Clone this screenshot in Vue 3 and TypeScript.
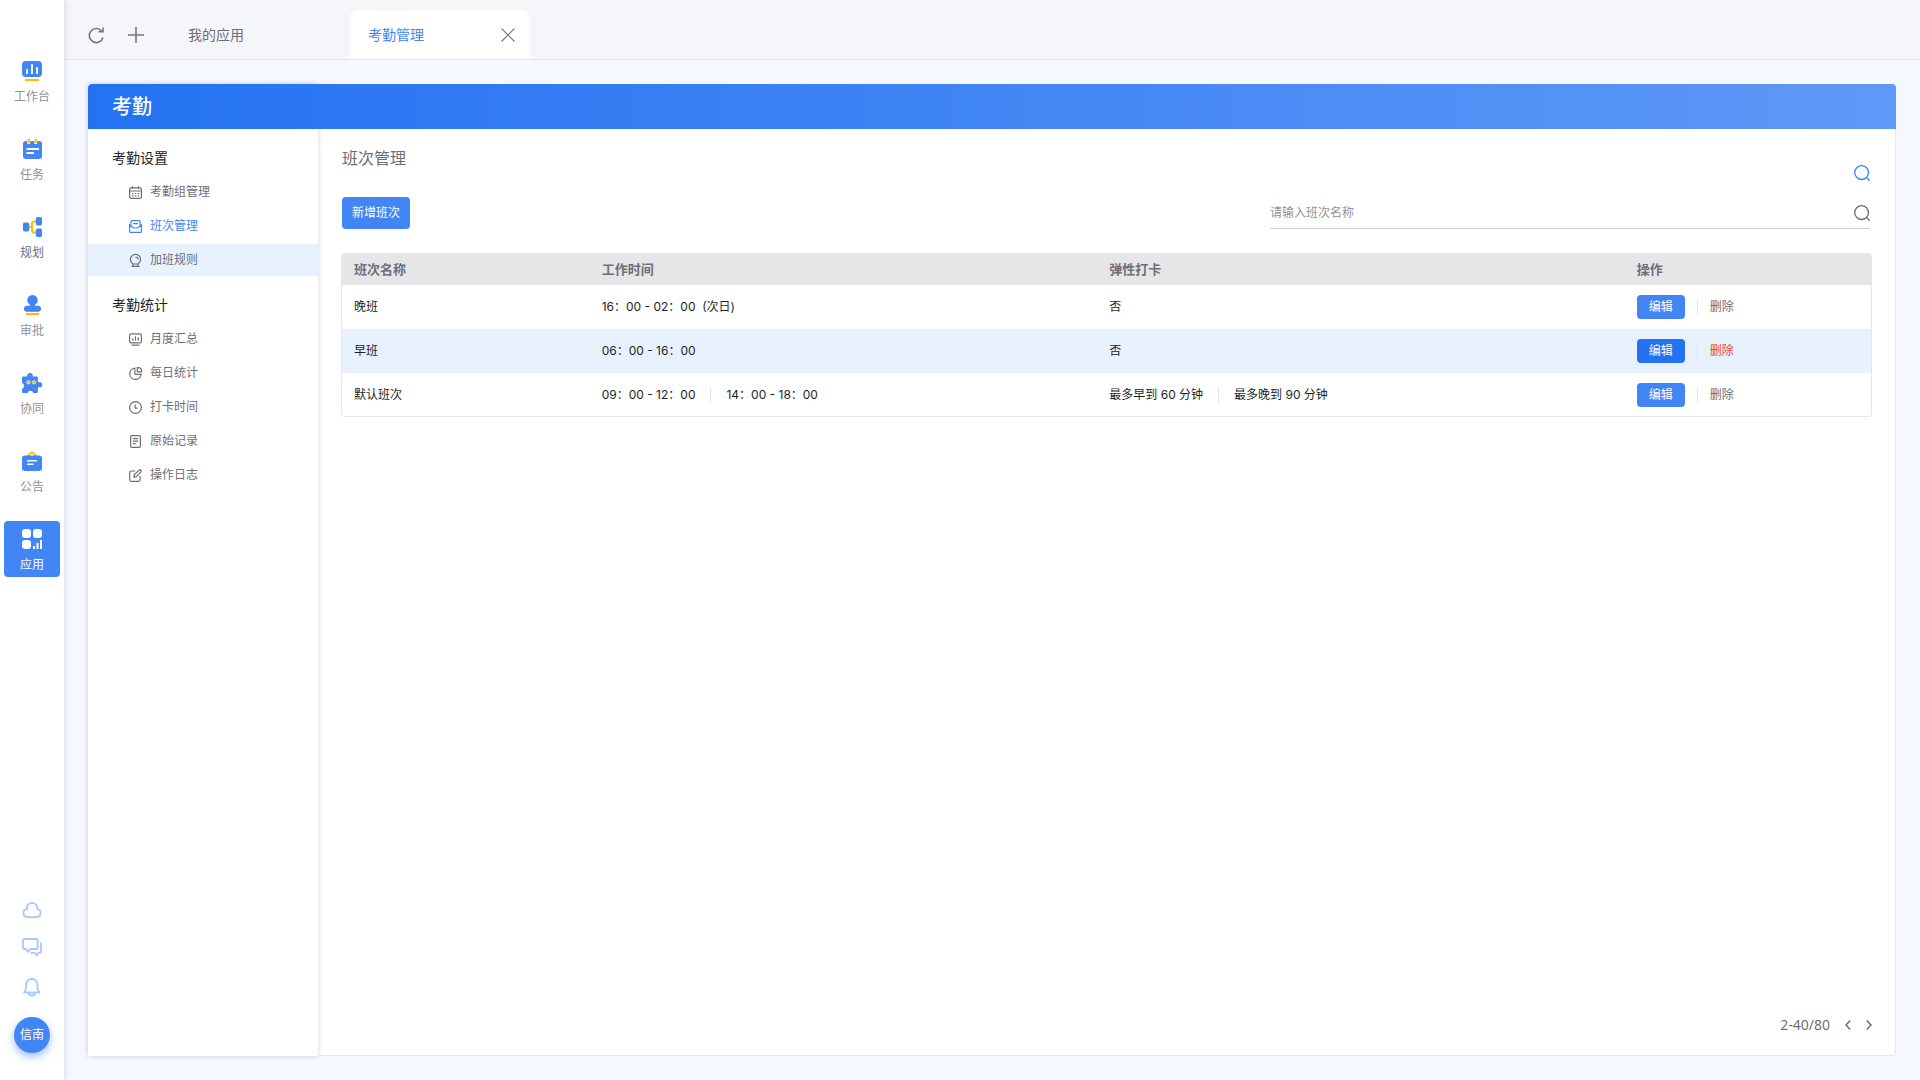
<script setup lang="ts">
import { ref } from 'vue'

interface RailItem { key: string; label: string; active?: boolean; strong?: boolean }
interface MenuItem { key: string; label: string; current?: boolean; hover?: boolean }
interface MenuGroup { title: string; items: MenuItem[] }
interface Shift { name: string; times: string[]; flex: string[]; hover?: boolean }

const railItems: RailItem[] = [
  { key: 'desk', label: '工作台' },
  { key: 'task', label: '任务' },
  { key: 'plan', label: '规划', strong: true },
  { key: 'approve', label: '审批' },
  { key: 'team', label: '协同' },
  { key: 'notice', label: '公告' },
  { key: 'apps', label: '应用', active: true },
]

const railIcons: Record<string, string> = {
  desk: `<rect width="20" height="16" rx="4" fill="#4285f4"/><path d="M5 8v5M10 3v10M15 6v7" stroke="#fff" stroke-width="1.8"/><rect x="3" y="18" width="14" height="2" fill="#fbbc05"/>`,
  task: `<rect x="1" y="2" width="19" height="18" rx="3" fill="#4285f4"/><path d="M5 0h3.400v3.500a1.700 1.700 0 0 1-3.400 0zM12 0h3.400v3.500a1.700 1.700 0 0 1-3.400 0z" fill="#fff"/><path d="M6.700 0v4M13.700 0v4" stroke="#fbbc05" stroke-width="2.200"/><path d="M4.500 10H17M4.500 14H12" stroke="#fff" stroke-width="1.800"/>`,
  plan: `<path d="M7 10h3M14.500 4.500H12a2 2 0 0 0-2 2v7a2 2 0 0 0 2 2h2.500" fill="none" stroke="#fbbc05" stroke-width="2"/><rect x="1" y="5.500" width="6.200" height="9" rx="1.800" fill="#4285f4"/><rect x="13.800" width="6.200" height="8.500" rx="1.800" fill="#4285f4"/><rect x="13.800" y="11.500" width="6.200" height="8.500" rx="1.800" fill="#4285f4"/>`,
  approve: `<circle cx="10.500" cy="5.200" r="5.200" fill="#4285f4"/><path d="M8.500 8h4v1.500c0 1 .8 1.200 1.800 1.200h1.700a3 3 0 0 1 0 6H5a3 3 0 0 1 0-6h1.700c1 0 1.800-.2 1.800-1.200z" fill="#4285f4"/><rect x="4" y="18" width="13" height="2" fill="#fbbc05"/>`,
  team: `<path d="M5.200 3.600V2.900a2.800 2.800 0 0 1 5.600 0v.7H14.700a1.200 1.200 0 0 1 1.200 1.200v3.500c0 .8.5 1 1.200.9a2.600 2.600 0 1 1 .2 5.100c-.8 0-1.400.2-1.400 1v3.500a1.200 1.200 0 0 1-1.200 1.200H11.200a2.900 2.900 0 0 0-5.600 0H1.200a1.200 1.200 0 0 1-1.200-1.200V16.500a3 3 0 0 1 1.200-1.700c1.300-.9 1.300-2.800.3-3.800C.5 10.300 0 9.800 0 9V4.800a1.200 1.200 0 0 1 1.200-1.200z" fill="#4285f4"/><circle cx="6.500" cy="9.300" r="2.100" fill="#dfe6ef"/><circle cx="12" cy="9.300" r="2.100" fill="#dfe6ef"/><circle cx="6.500" cy="9.300" r="1.400" fill="#fbbc05"/><circle cx="12" cy="9.300" r="1.400" fill="#fbbc05"/>`,
  notice: `<path d="M5 5.500 9 1.800q1-1 2 0l4 3.700" fill="none" stroke="#fbbc05" stroke-width="1.800"/><rect y="4.500" width="20" height="15.500" rx="3" fill="#4285f4"/><path d="M5 9.800h10M5 13.200h6.500" stroke="#fff" stroke-width="1.500"/>`,
  apps: `<g fill="#fff"><rect width="9" height="9" rx="3"/><rect x="11" width="9" height="9" rx="3"/><rect y="11" width="9" height="9" rx="3"/><rect x="11" y="17" width="2" height="3"/><rect x="14.500" y="14" width="2" height="6"/><rect x="18" y="11" width="2" height="9"/></g>`,
}

const menu: MenuGroup[] = [
  {
    title: '考勤设置',
    items: [
      { key: 'group', label: '考勤组管理' },
      { key: 'shift', label: '班次管理', current: true },
      { key: 'rule', label: '加班规则', hover: true },
    ],
  },
  {
    title: '考勤统计',
    items: [
      { key: 'month', label: '月度汇总' },
      { key: 'daily', label: '每日统计' },
      { key: 'clock', label: '打卡时间' },
      { key: 'record', label: '原始记录' },
      { key: 'log', label: '操作日志' },
    ],
  },
]

const menuIcons: Record<string, string> = {
  group: `<rect x=".6" y="1.800" width="11.800" height="10.600" rx="1.500"/><path d="M.6 5h11.800M3.500 .2v2.600M9.500 .2v2.600M3 7.500h1.500M5.800 7.500h1.500M8.600 7.500h1.500M3 9.800h1.500M5.800 9.800h1.500M8.600 9.800h1.500"/>`,
  shift: `<path d="M2 5V1.600a1 1 0 0 1 1-1h7a1 1 0 0 1 1 1V5M.6 4.800v6.600a1 1 0 0 0 1 1h9.800a1 1 0 0 0 1-1V4.800L8.500 8h-4zM4 3.600h5"/>`,
  rule: `<path d="M4.300 10C2.600 9 1.400 7.400 1.400 5.500a5.100 5.100 0 0 1 10.200 0c0 1.900-1.200 3.500-2.900 4.500zM6.500 3a2.600 2.600 0 0 1 2.600 2.600M2.500 12.400h8M4.300 10l-.8 2.200M8.700 10l.8 2.200"/>`,
  month: `<rect x=".6" y=".8" width="11.800" height="9" rx="1.600"/><path d="M2.500 12.200h8M3.800 5.200v2.500M6.500 3.200v4.500M9.200 4.200v3.500"/>`,
  daily: `<path d="M5.800 1.100a5.700 5.700 0 1 0 6.300 6.300H7a1.200 1.200 0 0 1-1.200-1.200zM8.300 .6h1.200a3 3 0 0 1 3 3v1.200H8.300z"/>`,
  clock: `<circle cx="6.500" cy="6.500" r="5.900"/><path d="M6.200 3.400v3.800h2.300"/>`,
  record: `<rect x="1.600" y=".6" width="9.800" height="11.800" rx="1.300"/><path d="M3.800 3.700h5.400M3.800 6.200h5.400M3.800 8.700h3"/>`,
  log: `<path d="M6.200 2H2.300A1.600 1.600 0 0 0 .7 3.600v7.200a1.600 1.600 0 0 0 1.600 1.600h7.200a1.600 1.600 0 0 0 1.600-1.600V7M5 8.200l.4-2.600 4.700-4.500a1.200 1.200 0 0 1 1.800 1.800L7.400 7.700z"/>`,
}

const tools = [
  { key: 'cloud', label: '云盘', height: 16, body: `<path d="M4.800 7.800V7a5.200 5.200 0 0 1 10.400 0v.8a4.200 4.200 0 0 1-.4 8.300H5.200a4.200 4.200 0 0 1-.4-8.300h1.400"/>` },
  { key: 'chat', label: '消息', height: 20, body: `<path d="M2.500 2h11.600a1.600 1.600 0 0 1 1.600 1.600v6.800a1.600 1.600 0 0 1-1.600 1.600H8.500L6 14.800 4.200 12H2.500A1.600 1.600 0 0 1 .9 10.400V3.600A1.600 1.600 0 0 1 2.500 2zM19 5.500v9a1.300 1.300 0 0 1-1.300 1.300h-1.500L15 18.500l-2.600-2.700H8.500"/>` },
  { key: 'bell', label: '通知', height: 20, body: `<path d="M9 1.800C5.600 2.600 4 5.200 4 8.500v3.800L2 15.500h15.500l-2-3.200V8.500c0-3.300-1.500-5.900-4.900-6.700zM6.500 16.500c.6 2.800 6 2.800 6.600 0M8.500 1.600h2.500"/>` },
]

const shifts: Shift[] = [
  { name: '晚班', times: ['16：00 - 02：00  (次日)'], flex: ['否'] },
  { name: '早班', times: ['06：00 - 16：00'], flex: ['否'], hover: true },
  { name: '默认班次', times: ['09：00 - 12：00', '14：00 - 18：00'], flex: ['最多早到 60 分钟', '最多晚到 90 分钟'] },
]

const keyword = ref('')
</script>

<template>
  <div class="shell">
    <nav class="rail" aria-label="主导航">
      <div class="rail-list">
        <a
          v-for="item in railItems"
          :key="item.key"
          href="#"
          class="rail-item"
          :class="{ active: item.active, strong: item.strong }"
        >
          <svg width="20" height="20" viewBox="0 0 20 20" v-html="railIcons[item.key]"></svg>
          <span>{{ item.label }}</span>
        </a>
      </div>
      <div class="rail-tools">
        <button v-for="t in tools" :key="t.key" type="button" :aria-label="t.label">
          <svg class="tool-icon" width="20" :height="t.height" :viewBox="`0 0 20 ${t.height}`" v-html="t.body"></svg>
        </button>
        <button type="button" class="avatar">信南</button>
      </div>
    </nav>

    <div class="workspace">
      <header class="topbar">
        <div class="topbar-actions">
          <button type="button" aria-label="刷新">
            <svg width="16" height="16" viewBox="0 0 16 16" class="line-icon">
              <path d="M13.600 4A7 7 0 1 0 15 10.500M15 .5v4.200h-4.500" />
            </svg>
          </button>
          <button type="button" aria-label="新建">
            <svg width="16" height="16" viewBox="0 0 16 16" class="line-icon"><path d="M8 0v16M0 8h16" /></svg>
          </button>
        </div>
        <div class="tab"><button type="button" class="tab-name">我的应用</button></div>
        <div class="tab current">
          <button type="button" class="tab-name">考勤管理</button>
          <button type="button" aria-label="关闭">
            <svg width="14" height="14" viewBox="0 0 14 14" class="line-icon thin"><path d="M.5 .5l13 13M13.500 .5l-13 13" /></svg>
          </button>
        </div>
      </header>

      <div class="panel">
        <h1 class="banner">考勤</h1>

        <aside class="side">
          <section v-for="group in menu" :key="group.title" class="side-group">
            <h2>{{ group.title }}</h2>
            <a
              v-for="item in group.items"
              :key="item.key"
              href="#"
              :class="{ current: item.current, hover: item.hover }"
            >
              <svg class="menu-icon" width="13" height="13" viewBox="0 0 13 13" v-html="menuIcons[item.key]"></svg>
              <span>{{ item.label }}</span>
            </a>
          </section>
        </aside>

        <main class="content">
          <div class="content-head">
            <h2>班次管理</h2>
            <button type="button" class="search-toggle" aria-label="搜索">
              <svg width="16" height="16" viewBox="0 0 16 16"><circle cx="7.600" cy="7.600" r="6.900" /><path d="M12.600 12.400l3 3.300" /></svg>
            </button>
          </div>

          <div class="toolbar">
            <button type="button" class="primary add">新增班次</button>
            <label class="search">
              <input v-model="keyword" type="text" placeholder="请输入班次名称" aria-label="班次名称" />
              <svg width="16" height="16" viewBox="0 0 16 16"><circle cx="7.600" cy="7.600" r="6.900" /><path d="M12.600 12.400l3 3.300" /></svg>
            </label>
          </div>

          <div class="table-box">
            <table>
              <thead>
                <tr>
                  <th class="col-name">班次名称</th>
                  <th class="col-time">工作时间</th>
                  <th class="col-flex">弹性打卡</th>
                  <th>操作</th>
                </tr>
              </thead>
              <tbody>
                <tr v-for="s in shifts" :key="s.name" :class="{ hover: s.hover }">
                  <td>{{ s.name }}</td>
                  <td><span v-for="t in s.times" :key="t" class="part">{{ t }}</span></td>
                  <td><span v-for="f in s.flex" :key="f" class="part">{{ f }}</span></td>
                  <td>
                    <div class="ops">
                      <button type="button" class="primary edit">编辑</button>
                      <button type="button" class="remove">删除</button>
                    </div>
                  </td>
                </tr>
              </tbody>
            </table>
          </div>

          <footer class="pager">
            <span>2-40/80</span>
            <button type="button" aria-label="上一页">
              <svg width="6" height="10" viewBox="0 0 6 10"><path d="M5.200 .5L1 5l4.200 4.500" /></svg>
            </button>
            <button type="button" aria-label="下一页">
              <svg width="6" height="10" viewBox="0 0 6 10"><path d="M.8 .5L5 5 .8 9.500" /></svg>
            </button>
          </footer>
        </main>
      </div>
    </div>
  </div>
</template>

<style>
body {
  margin: 0;
  background: #f5f8ff;
}
</style>

<style scoped>
.shell {
  display: flex;
  min-height: 100vh;
  font-family: "Noto Sans", "Noto Sans CJK SC", sans-serif;
  font-size: 12px;
  line-height: 16px;
  color: #1c1f26;
  background: #f5f8ff;
}
.shell *,
.shell *::before {
  box-sizing: border-box;
}
button {
  margin: 0;
  padding: 0;
  border: 0;
  background: none;
  font: inherit;
  color: inherit;
  cursor: pointer;
}
a {
  text-decoration: none;
  color: inherit;
}
svg {
  display: block;
  flex: none;
  overflow: visible;
}
h1,
h2 {
  margin: 0;
  font-weight: 400;
}

/* left rail */
.rail {
  position: relative;
  z-index: 3;
  flex: none;
  width: 64px;
  display: flex;
  flex-direction: column;
  justify-content: space-between;
  align-items: center;
  padding: 53px 4px 27px;
  background: #fff;
  box-shadow: 0 0 6px rgba(60, 80, 130, 0.24);
}
.rail-list {
  align-self: stretch;
  display: flex;
  flex-direction: column;
  gap: 22px;
}
.rail-item {
  display: flex;
  flex-direction: column;
  align-items: center;
  gap: 9px;
  height: 56px;
  padding-top: 8px;
  border-radius: 4px;
  line-height: 14px;
  color: #929297;
}
.rail-item.strong {
  color: #6f6e78;
}
.rail-item.active {
  background: #4285f4;
  color: #fff;
}
.rail-tools {
  display: flex;
  flex-direction: column;
  align-items: center;
  gap: 20px;
}
.tool-icon {
  fill: none;
  stroke: #a9c8fa;
  stroke-width: 1.8;
  stroke-linejoin: round;
}
.avatar {
  width: 36px;
  height: 36px;
  border-radius: 50%;
  background: #4285f4;
  color: #fff;
  box-shadow: 0 4px 8px rgba(66, 133, 244, 0.5);
}

/* top tabs */
.workspace {
  flex: 1;
  min-width: 0;
  display: flex;
  flex-direction: column;
}
.topbar {
  display: flex;
  align-items: flex-end;
  height: 60px;
  background: #f5f6fa;
  border-bottom: 1px solid #e3e4e8;
  font-size: 14px;
  color: #6f6e78;
}
.topbar-actions {
  display: flex;
  align-items: center;
  gap: 24px;
  width: 106px;
  height: 49px;
  padding-left: 24px;
}
.line-icon {
  fill: none;
  stroke: #77767f;
  stroke-width: 1.6;
}
.line-icon.thin {
  stroke-width: 1.1;
}
.tab {
  display: flex;
  align-items: center;
  justify-content: space-between;
  width: 180px;
  height: 49px;
  padding: 0 15px 0 18px;
  border-radius: 8px 8px 0 0;
}
.tab.current {
  background: #fff;
}
.tab.current .tab-name {
  color: #4285f4;
}

/* application panel */
.panel {
  flex: 1;
  display: grid;
  grid-template: 45px 1fr / 230px 1fr;
  margin: 24px;
}
.banner {
  z-index: 2;
  grid-area: 1 / 1 / 2 / 3;
  padding-left: 24px;
  border-radius: 4px 4px 0 0;
  background: linear-gradient(90deg, #2472f2, #5f99f7);
  font-size: 20px;
  font-weight: 500;
  line-height: 46px;
  color: #fff;
}
.side {
  z-index: 1;
  grid-area: 1 / 1 / 3 / 2;
  padding-top: 58px;
  background: #fff;
  box-shadow: 0 0 5px rgba(40, 50, 80, 0.22);
}
.side-group {
  display: flex;
  flex-direction: column;
  gap: 2px;
  margin-bottom: 13px;
  line-height: 32px;
}
.side-group h2 {
  padding-left: 24px;
  font-size: 14px;
}
.side-group a {
  display: flex;
  align-items: center;
  gap: 8px;
  height: 32px;
  padding-left: 41px;
  color: #6f6e78;
}
.side-group a.current {
  color: #4285f4;
}
.side-group a.hover {
  background: #e8f2ff;
}
.menu-icon {
  fill: none;
  stroke: currentColor;
  stroke-width: 1.2;
}

/* content */
.content {
  grid-area: 2 / 2 / 3 / 3;
  display: flex;
  flex-direction: column;
  min-width: 0;
  padding: 17px 23px 18px;
  background: #fff;
  border: 1px solid #e5e7ec;
  border-width: 0 1px 1px 0;
  border-radius: 0 0 4px 0;
}
.content-head {
  display: flex;
  justify-content: space-between;
  align-items: flex-start;
  height: 35px;
  padding: 0 2px 0 1px;
}
.content-head h2 {
  font-size: 16px;
  line-height: 24px;
  color: #6f6e78;
}
.search-toggle {
  align-self: flex-end;
}
.search-toggle svg,
.search svg {
  fill: none;
  stroke: #6f6e78;
  stroke-width: 1.3;
}
.search-toggle svg {
  stroke: #4285f4;
}
.toolbar {
  display: flex;
  justify-content: space-between;
  margin: 16px 2px 24px 1px;
}
.primary {
  border-radius: 4px;
  background: #4285f4;
  color: #fff;
}
.add {
  width: 68px;
  height: 32px;
}
.search {
  display: flex;
  align-items: center;
  width: 600px;
  height: 32px;
  border-bottom: 1px solid #d2d2d6;
}
.search input {
  flex: 1;
  min-width: 0;
  padding: 0;
  border: 0;
  outline: 0;
  background: none;
  font: inherit;
  color: inherit;
}
.search input::placeholder {
  color: #929297;
  opacity: 1;
}
.table-box {
  overflow: hidden;
  border: 1px solid #e6e6e8;
  border-top: 0;
  border-radius: 4px;
}
table {
  width: 100%;
  table-layout: fixed;
  border-collapse: collapse;
}
th,
td {
  padding: 0 12px;
  text-align: left;
  white-space: pre;
}
th {
  height: 32px;
  background: #e6e6e8;
  font-size: 13px;
  font-weight: 700;
  color: #6f6e78;
}
td {
  height: 44px;
}
tr:last-child td {
  height: 43px;
}
.col-name {
  width: 16.2%;
}
.col-time {
  width: 33.2%;
}
.col-flex {
  width: 34.5%;
}
tr.hover td {
  background: #e8f2ff;
}
.part {
  display: inline-block;
  font-family: Inter, "Noto Sans CJK SC", sans-serif;
}
.part + .part {
  margin-left: 15px;
  padding-left: 15px;
  border-left: 1px solid #e3e4e8;
}
.ops {
  display: flex;
  align-items: center;
  gap: 12px;
}
.edit {
  width: 48px;
  height: 24px;
}
.remove {
  padding-left: 12px;
  border-left: 1px solid #e3e4e8;
  color: #6f6e78;
}
tr.hover .edit {
  background: #2472f2;
}
tr.hover .remove {
  color: #ea4335;
}
.pager {
  display: flex;
  justify-content: flex-end;
  align-items: center;
  gap: 15px;
  margin-top: auto;
  font-size: 14px;
  line-height: 24px;
  color: #6f6e78;
}
.pager svg {
  fill: none;
  stroke: #6f6e78;
  stroke-width: 1.5;
}
</style>
